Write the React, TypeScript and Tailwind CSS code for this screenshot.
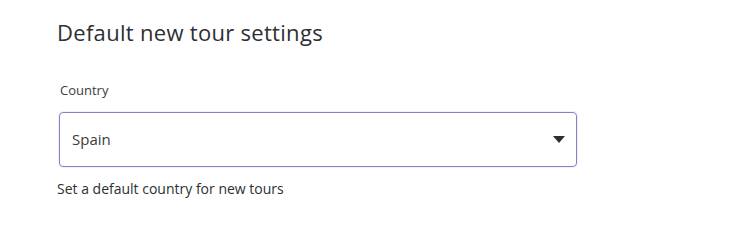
export default function App() {
  return (
    <div className="min-h-screen bg-white pl-[57px] pt-[17px]" style={{ fontFamily: '"Open Sans", "Noto Sans", sans-serif' }}>
      <h2 className="text-[22px] leading-[30px] text-[#2d2f33] font-normal tracking-[0.3px]">Default new tour settings</h2>
      <div className="mt-[34px] w-[520px]">
        <label className="block pl-[3px] text-[13px] leading-[18px] text-[#3a3c40]">Country</label>
        <div className="mt-[13px] ml-[2px] flex h-[55px] w-[518px] items-center justify-between rounded-[4px] border border-[#8a7fc4] pl-[12px] pr-[11px] shadow-[0_0_0_1px_rgba(138,127,196,0.12)]">
          <span className="text-[15px] text-[#3a3c40]">Spain</span>
          <svg width="12" height="7" viewBox="0 0 12 7">
            <path d="M0 0h12L6 7z" fill="#2d2f33" />
          </svg>
        </div>
        <p className="mt-[13px] text-[14px] leading-[18px] text-[#2d2f33]">Set a default country for new tours</p>
      </div>
    </div>
  );
}
